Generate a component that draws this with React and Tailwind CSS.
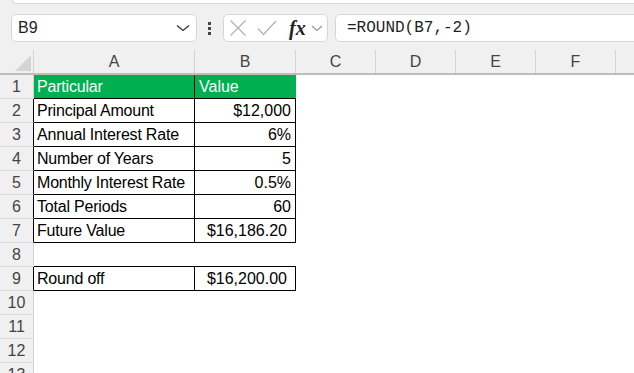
import React from "react";

const rows = [
  { n: 1, a: "Particular", b: "Value", head: true },
  { n: 2, a: "Principal Amount", b: "$12,000", box: true },
  { n: 3, a: "Annual Interest Rate", b: "6%", box: true },
  { n: 4, a: "Number of Years", b: "5", box: true },
  { n: 5, a: "Monthly Interest Rate", b: "0.5%", box: true },
  { n: 6, a: "Total Periods", b: "60", box: true },
  { n: 7, a: "Future Value", b: "$16,186.20", box: true, cur: true },
  { n: 8, under: true },
  { n: 9, a: "Round off", b: "$16,200.00", box: true, cur: true },
  { n: 10 },
  { n: 11 },
  { n: 12 },
  { n: 13 },
];

const cols = [
  { l: "A", w: "w-[161px]" },
  { l: "B", w: "w-[101px]" },
  { l: "C", w: "w-[80px]" },
  { l: "D", w: "w-[80px]" },
  { l: "E", w: "w-[80px]" },
  { l: "F", w: "w-[80px]" },
];

const FormulaBar = () => (
  <div className="bg-[#f0f0f0] h-[50px] flex flex-col">
    <div className="ml-[12px] h-[4px] bg-white rounded-bl-[6px] border-b border-l border-[#d6d6d6]" />
    <div className="flex items-center mt-[10px] h-[28px]">
      {/* name box */}
      <div className="ml-[11px] w-[186px] h-[28px] bg-white border border-[#d6d6d6] rounded-[5px] flex items-center justify-between pl-[6px] pr-[6px]">
        <span className="text-[16px] text-[#1f1f1f]">B9</span>
        <svg width="14" height="8" viewBox="0 0 14 8">
          <path d="M1 1.5 L7 6.5 L13 1.5" fill="none" stroke="#333" strokeWidth="1.3" />
        </svg>
      </div>
      {/* dots */}
      <div className="ml-[11px] w-[4px] flex flex-col gap-[2px]">
        <div className="w-[3px] h-[3px] bg-[#444]" />
        <div className="w-[3px] h-[3px] bg-[#444]" />
        <div className="w-[3px] h-[3px] bg-[#444]" />
      </div>
      {/* fx box */}
      <div className="ml-[11px] w-[105px] h-[28px] bg-white border border-[#d6d6d6] rounded-[5px] flex items-center pl-[5px]">
        <svg width="18" height="16" viewBox="0 0 18 16">
          <path d="M1.5 0.5 L16.5 15.5 M16.5 0.5 L1.5 15.5" stroke="#b3b3b3" strokeWidth="1.3" />
        </svg>
        <svg className="ml-[10px]" width="20" height="16" viewBox="0 0 20 16">
          <path d="M1 8.5 L6.5 14.5 L19 1" fill="none" stroke="#b3b3b3" strokeWidth="1.3" />
        </svg>
        <span
          className="ml-[12px] text-[20px] italic font-bold leading-none text-[#222]"
          style={{ fontFamily: "'Liberation Serif', serif" }}
        >
          fx
        </span>
        <svg className="ml-[5px]" width="12" height="7" viewBox="0 0 12 7">
          <path d="M1 1 L6 5.5 L11 1" fill="none" stroke="#999" strokeWidth="1.2" />
        </svg>
      </div>
      {/* formula input */}
      <div className="ml-[7px] flex-1 -mr-[6px] h-[28px] bg-white border border-[#d6d6d6] rounded-[5px] flex items-center pl-[11px]">
        <span
          className="text-[16px] text-[#1f1f1f]"
          style={{ fontFamily: "'Liberation Mono', monospace" }}
        >
          =ROUND(B7,-2)
        </span>
      </div>
    </div>
  </div>
);

const HeaderRow = () => (
  <div className="flex h-[25px] bg-[#f0f0f0] border-b-2 border-[#bdbdbd]">
    <div className="w-[34px] shrink-0 border-r border-[#d4d4d4] relative">
      <svg className="absolute left-[15px] top-[5px]" width="16" height="16" viewBox="0 0 16 16">
        <polygon points="16,0 16,16 0,16" fill="#d4d4d4" />
      </svg>
    </div>
    {cols.map((c) => (
      <div
        key={c.l}
        className={`${c.w} shrink-0 border-r border-[#d4d4d4] flex items-center justify-center text-[16px] text-[#444]`}
      >
        {c.l}
      </div>
    ))}
    <div className="flex-1" />
  </div>
);

const Row = ({ r }) => {
  const blackSide = r.box;
  const bottom = r.box || r.head || r.under;
  return (
    <div className="flex h-[24px]">
      <div
        className={`w-[34px] shrink-0 bg-[#f0f0f0] border-b border-b-[#d9d9d9] border-r ${
          blackSide ? "border-r-black" : "border-r-[#d4d4d4]"
        } flex items-center justify-center text-[16px] text-[#444]`}
      >
        {r.n}
      </div>
      <div
        className={`w-[161px] shrink-0 flex items-center pl-[3px] text-[16px] tracking-[-0.2px] whitespace-nowrap ${
          r.head ? "bg-[#00b050] text-white" : "text-black"
        } ${bottom ? "border-b border-black" : ""} ${
          r.box || r.head ? "border-r border-black" : ""
        }`}
      >
        {r.a}
      </div>
      <div
        className={`w-[101px] shrink-0 flex items-center text-[16px] whitespace-nowrap ${
          r.head ? "bg-[#00b050] text-white pl-[4px]" : "justify-end text-black"
        } ${r.cur ? "pr-[8px]" : "pr-[4px]"} ${bottom ? "border-b border-black" : ""} ${
          r.box ? "border-r border-black" : ""
        }`}
      >
        {r.b}
      </div>
      <div className="flex-1" />
    </div>
  );
};

export default function App() {
  return (
    <div
      className="w-[634px] h-[373px] overflow-hidden bg-white"
      style={{ fontFamily: "'Liberation Sans', Arial, sans-serif" }}
    >
      <FormulaBar />
      <HeaderRow />
      {rows.map((r) => (
        <Row key={r.n} r={r} />
      ))}
    </div>
  );
}
